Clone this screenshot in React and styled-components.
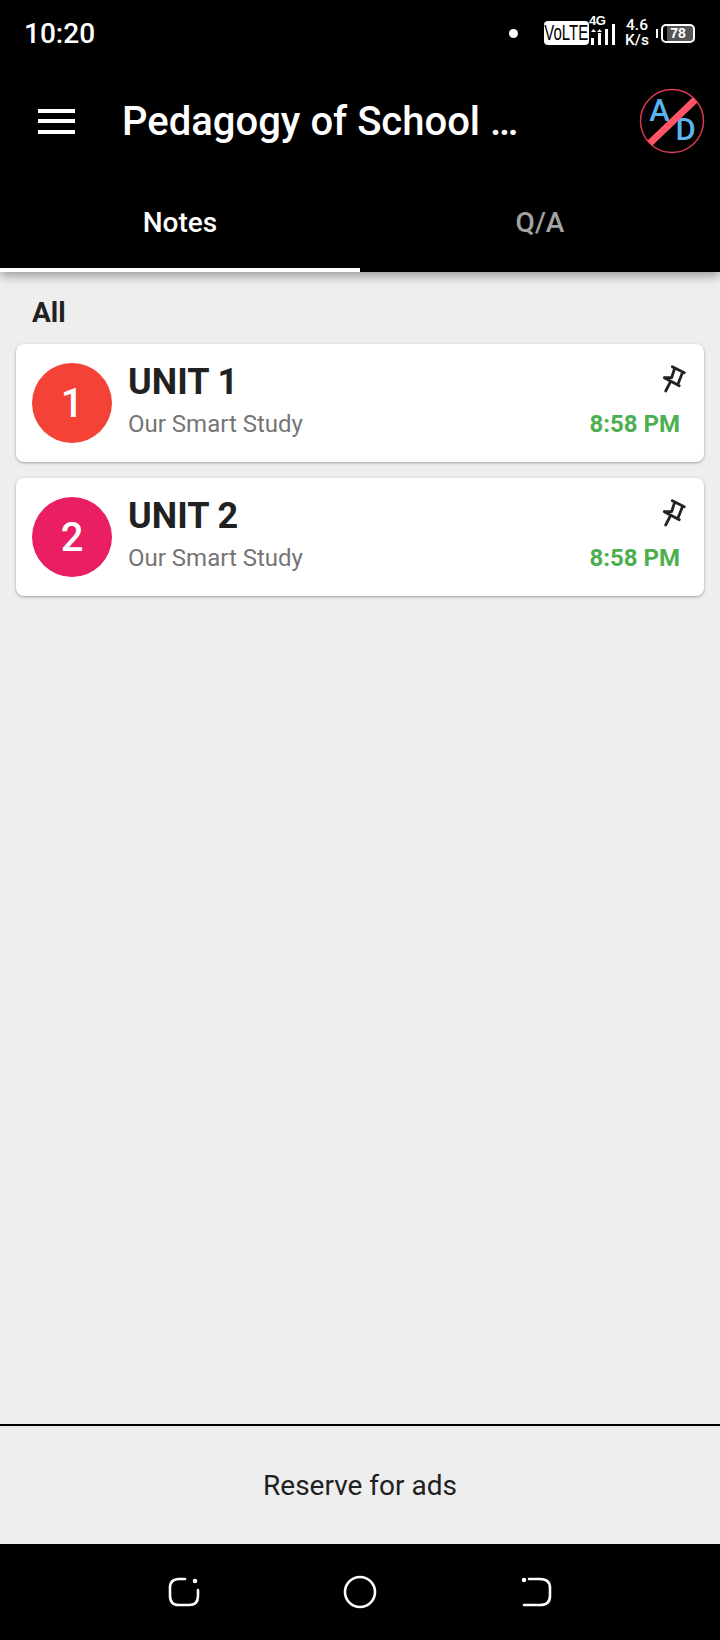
import React from "react";
import styled, { createGlobalStyle } from "styled-components";

const GlobalStyle = createGlobalStyle`
  html, body { margin: 0; padding: 0; background: #eeeeee; }
  * { box-sizing: border-box; }
  body { font-family: Roboto, "Liberation Sans", sans-serif; }
`;

const Page = styled.div`
  width: 720px;
  height: 1640px;
  display: flex;
  flex-direction: column;
  background: #eeeeee;
  overflow: hidden;
`;

const Header = styled.header`
  background: #000;
  color: #fff;
  position: relative;
  z-index: 1;
  box-shadow: 0 4px 10px rgba(0, 0, 0, 0.35);
`;

const StatusBar = styled.div`
  height: 66px;
  display: flex;
  align-items: center;
  padding: 0 25px 0 24px;
`;

const Clock = styled.span`
  font-size: 28px;
  font-weight: 500;
  margin-right: auto;
`;

const StatusDot = styled.span`
  width: 9px;
  height: 9px;
  border-radius: 50%;
  background: #fff;
  margin-right: 26px;
`;

const Volte = styled.span`
  width: 45px;
  height: 24px;
  border-radius: 4px;
  background: #fff;
  color: #000;
  display: flex;
  align-items: center;
  justify-content: center;
  overflow: hidden;
`;

const VolteText = styled.span`
  font-family: "Liberation Sans", sans-serif;
  font-size: 22px;
  line-height: 24px;
  white-space: nowrap;
  transform: scaleX(0.68);
`;

const SignalBox = styled.span`
  position: relative;
  width: 30px;
  height: 30px;
  margin: 0 6px 0 -1px;
  display: block;
`;

const FourG = styled.span`
  position: absolute;
  left: 1px;
  top: -3px;
  font-family: "Liberation Sans", sans-serif;
  font-size: 13px;
  line-height: 12px;
  font-weight: 700;
  letter-spacing: -0.5px;
`;

const Speed = styled.span`
  width: 26px;
  font-size: 15.5px;
  line-height: 15px;
  font-weight: 500;
  text-align: center;
  margin-right: 6px;
`;

const BatteryNub = styled.span`
  width: 2px;
  height: 9px;
  background: #fff;
  margin-right: 3px;
`;

const Battery = styled.span`
  width: 34px;
  height: 19px;
  border: 2px solid #fff;
  border-radius: 5px;
  font-family: "Liberation Sans", sans-serif;
  font-size: 14px;
  font-weight: 700;
  line-height: 15px;
  text-align: center;
  background: linear-gradient(to right, transparent 0 4px, #555 4px 100%);
`;

const Toolbar = styled.div`
  height: 110px;
  display: flex;
  align-items: center;
  padding: 0 15px 0 38px;
`;

const MenuButton = styled.div`
  width: 37px;
  height: 25px;
  display: flex;
  flex-direction: column;
  justify-content: space-between;
  margin-right: 47px;
`;

const MenuLine = styled.span`
  height: 4px;
  background: #fff;
`;

const Title = styled.h1`
  flex: 1;
  margin: 0;
  font-size: 40px;
  font-weight: 500;
  white-space: nowrap;
`;

const Tabs = styled.nav`
  height: 96px;
  display: flex;
`;

const Tab = styled.div`
  flex: 1;
  display: flex;
  align-items: center;
  justify-content: center;
  font-size: 28px;
  font-weight: 500;
  color: ${(p) => (p.$active ? "#fff" : "#a3a3a3")};
  border-bottom: 4px solid ${(p) => (p.$active ? "#fff" : "transparent")};
`;

const Content = styled.main`
  flex: 1;
  padding: 0 16px;
`;

const SectionLabel = styled.h2`
  margin: 0;
  height: 72px;
  padding: 24px 0 0 16px;
  font-size: 28px;
  line-height: 33px;
  font-weight: 700;
  color: #212121;
`;

const UnitList = styled.div`
  display: flex;
  flex-direction: column;
  gap: 16px;
`;

const Card = styled.article`
  height: 118px;
  background: #fff;
  border-radius: 8px;
  box-shadow: 0 1px 3px rgba(0, 0, 0, 0.35);
  display: flex;
  align-items: center;
  padding: 0 24px 0 16px;
`;

const Badge = styled.div`
  width: 80px;
  height: 80px;
  border-radius: 50%;
  background: ${(p) => p.$color};
  color: #fff;
  font-size: 40px;
  font-weight: 500;
  display: flex;
  align-items: center;
  justify-content: center;
  margin-right: 16px;
  flex: none;
`;

const CardText = styled.div`
  flex: 1;
  margin-top: -6px;
`;

const UnitName = styled.div`
  font-size: 36px;
  line-height: 42px;
  font-weight: 700;
  color: #212121;
`;

const UnitSource = styled.div`
  font-size: 24px;
  line-height: 30px;
  margin-top: 6px;
  color: #757575;
`;

const CardMeta = styled.div`
  display: flex;
  flex-direction: column;
  align-items: flex-end;
  justify-content: space-between;
  height: 78px;
  margin-top: -6px;
`;

const PinIcon = styled.svg`
  width: 30px;
  height: 30px;
  margin: 3px -10px 0 0;
`;

const Time = styled.div`
  font-size: 24px;
  line-height: 30px;
  font-weight: 700;
  color: #4caf50;
`;

const AdSlot = styled.div`
  height: 120px;
  border-top: 2px solid #000;
  display: flex;
  align-items: center;
  justify-content: center;
  font-size: 28px;
  color: #212121;
`;

const NavBar = styled.div`
  height: 96px;
  background: #000;
  display: flex;
  align-items: center;
  justify-content: center;
  gap: 141px;
`;

const NavIcon = styled.svg`
  width: 34px;
  height: 34px;
  fill: none;
  stroke: #fff;
  stroke-width: 2.6;
  stroke-linecap: round;
`;

const NoAdsLogo = () => (
  <svg width="66" height="66" viewBox="0 0 66 66">
    <circle cx="33" cy="33" r="31.5" fill="none" stroke="#d83a50" strokeWidth="1.5" />
    <text x="20.5" y="33" textAnchor="middle" fontFamily="Roboto, sans-serif" fontWeight="500" fontSize="31" fill="#5ab4f0">A</text>
    <text x="46.5" y="52" textAnchor="middle" fontFamily="Roboto, sans-serif" fontWeight="500" fontSize="31" fill="#5ab4f0">D</text>
    <line x1="11" y1="55" x2="56" y2="12" stroke="#ff5566" strokeWidth="7" />
  </svg>
);

const Pin = () => (
  <PinIcon viewBox="0 0 30 30" fill="none" stroke="#212121" strokeWidth="2.8" strokeLinecap="round" strokeLinejoin="round">
    <path d="M12.3 2.7 24.3 8.7M14.3 5.3 11.7 13.5 M22.7 8 18.3 19.3M4.3 13.7 19.3 21.7M4.3 13.7 11.7 13.5M10 18.7 5.7 27" />
  </PinIcon>
);

const units = [
  { id: 1, name: "UNIT 1", color: "#f44336" },
  { id: 2, name: "UNIT 2", color: "#e91e63" },
];

export default function App() {
  return (
    <Page>
      <GlobalStyle />
      <Header>
        <StatusBar>
          <Clock>10:20</Clock>
          <StatusDot />
          <Volte>
            <VolteText>VoLTE</VolteText>
          </Volte>
          <SignalBox>
            <FourG>4G</FourG>
            <svg width="30" height="30" viewBox="0 0 30 30" fill="#fff">
              <path d="M3 14 5.5 11 8 14ZM9 14 11.5 11 14 14Z" />
              <rect x="3" y="20" width="3" height="7" />
              <rect x="10" y="15" width="3" height="12" />
              <rect x="17" y="11" width="3" height="16" />
              <rect x="24" y="6" width="3" height="21" />
            </svg>
          </SignalBox>
          <Speed>4.6<br />K/s</Speed>
          <BatteryNub />
          <Battery>78</Battery>
        </StatusBar>
        <Toolbar>
          <MenuButton>
            <MenuLine />
            <MenuLine />
            <MenuLine />
          </MenuButton>
          <Title>Pedagogy of School …</Title>
          <NoAdsLogo />
        </Toolbar>
        <Tabs>
          <Tab $active>Notes</Tab>
          <Tab>Q/A</Tab>
        </Tabs>
      </Header>
      <Content>
        <SectionLabel>All</SectionLabel>
        <UnitList>
          {units.map((u) => (
            <Card key={u.id}>
              <Badge $color={u.color}>{u.id}</Badge>
              <CardText>
                <UnitName>{u.name}</UnitName>
                <UnitSource>Our Smart Study</UnitSource>
              </CardText>
              <CardMeta>
                <Pin />
                <Time>8:58 PM</Time>
              </CardMeta>
            </Card>
          ))}
        </UnitList>
      </Content>
      <AdSlot>Reserve for ads</AdSlot>
      <NavBar>
        <NavIcon viewBox="0 0 34 34">
          <path d="M30 15V21C30 27 27 30 21 30H11C5 30 2 27 2 21V13C2 7 5 4 11 4H17" />
          <circle cx="27" cy="6" r="1" fill="#fff" />
        </NavIcon>
        <NavIcon viewBox="0 0 34 34">
          <circle cx="17" cy="17" r="15" />
        </NavIcon>
        <NavIcon viewBox="0 0 34 34">
          <path d="M11 4H22C29 4 32 7 32 13V21C32 27 29 30 22 30H6" />
          <circle cx="6" cy="5" r="1" fill="#fff" />
        </NavIcon>
      </NavBar>
    </Page>
  );
}
